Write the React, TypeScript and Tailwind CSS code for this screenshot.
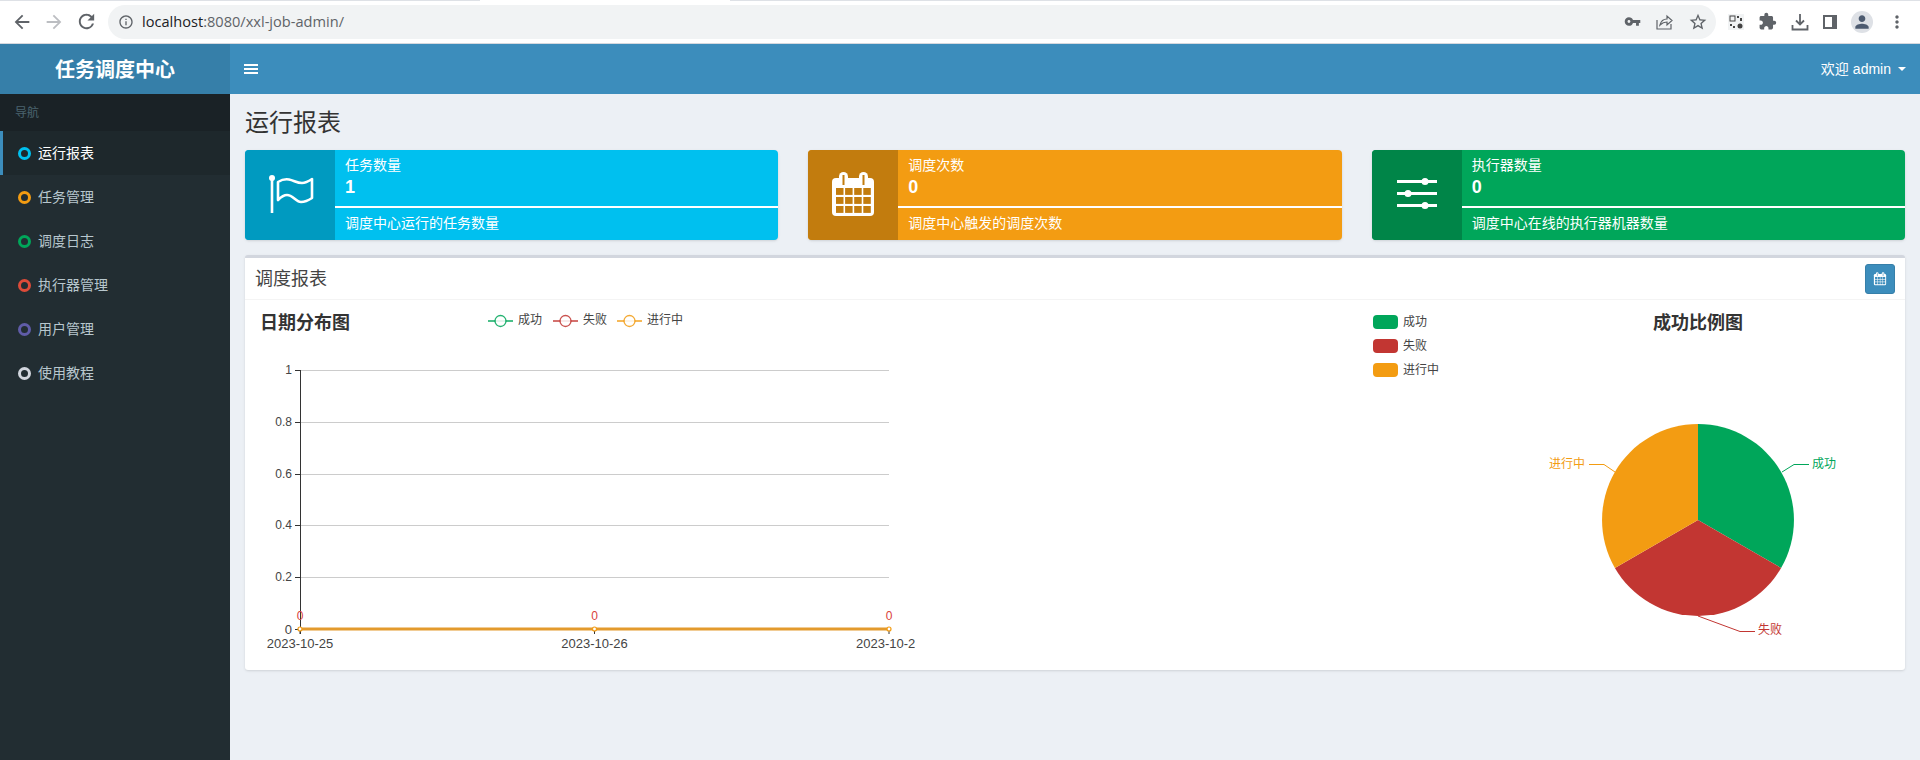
import React from "react";
import {
  MdArrowBack,
  MdArrowForward,
  MdRefresh,
  MdInfoOutline,
  MdVpnKey,
  MdStarBorder,
  MdExtension,
  MdPerson,
  MdMoreVert,
} from "react-icons/md";

const menus = [
  { name: "运行报表", ring: "border-[#00c0ef]", active: true },
  { name: "任务管理", ring: "border-[#f39c12]" },
  { name: "调度日志", ring: "border-[#00a65a]" },
  { name: "执行器管理", ring: "border-[#dd4b39]" },
  { name: "用户管理", ring: "border-[#605ca8]" },
  { name: "使用教程", ring: "border-[#d2d6de]" },
];

function FlagIcon() {
  return (
    <svg width="48" height="48" viewBox="0 0 48 48" fill="none" stroke="white">
      <circle cx="6" cy="7" r="3" fill="white" stroke="none" />
      <path d="M6 8V42" strokeWidth="2.6" />
      <path
        d="M12 11C16 8.5 20 8 23 8.5C28 9.5 31 12 36 12C40 12 43 10 46 8V27C43 29 40 31 35 31C30 31 27 24 21 24C18 24 15 26 12 29Z"
        strokeWidth="2.6"
        strokeLinejoin="round"
      />
    </svg>
  );
}

function CalendarIcon({ size = 48, cell = "#c27c0e" }: { size?: number; cell?: string }) {
  const cells = [];
  for (let r = 0; r < 3; r++) {
    for (let c = 0; c < 4; c++) {
      cells.push(<rect key={`${r}-${c}`} x={7 + c * 9.1} y={17 + r * 9} width="7.5" height="6.9" fill={cell} />);
    }
  }
  return (
    <svg width={size} height={size} viewBox="0 0 48 48">
      <rect x="3" y="7" width="42" height="38" rx="4" fill="white" />
      <rect x="10" y="1" width="9" height="14" rx="4.5" fill="white" />
      <rect x="30" y="1" width="9" height="14" rx="4.5" fill="white" />
      <rect x="13.5" y="4" width="2" height="10" fill={cell} />
      <rect x="33.5" y="4" width="2" height="10" fill={cell} />
      {cells}
    </svg>
  );
}

function SlidersIcon() {
  return (
    <svg width="40" height="32" viewBox="0 0 40 32" fill="white" className="mb-[5px]">
      <rect x="0" y="3" width="40" height="3" />
      <circle cx="28" cy="4.5" r="3.5" />
      <rect x="0" y="15" width="40" height="3" />
      <circle cx="11" cy="16.5" r="3.5" />
      <rect x="0" y="27" width="40" height="3" />
      <circle cx="28" cy="28.5" r="3.5" />
    </svg>
  );
}

const boxes = [
  {
    title: "任务数量",
    count: "1",
    desc: "调度中心运行的任务数量",
    bg: "bg-[#00c0ef]",
    iconBg: "bg-[#009ac0]",
    icon: <FlagIcon />,
  },
  {
    title: "调度次数",
    count: "0",
    desc: "调度中心触发的调度次数",
    bg: "bg-[#f39c12]",
    iconBg: "bg-[#c27c0e]",
    icon: <CalendarIcon />,
  },
  {
    title: "执行器数量",
    count: "0",
    desc: "调度中心在线的执行器机器数量",
    bg: "bg-[#00a65a]",
    iconBg: "bg-[#008548]",
    icon: <SlidersIcon />,
  },
];

function BrowserBar() {
  return (
    <div className="h-[44px] bg-white border-b border-[#d5d8de] flex items-center text-[#5f6368] relative">
      <div className="absolute top-0 left-0 w-[480px] h-px bg-[#dee1e6]" />
      <div className="absolute top-0 left-[730px] right-0 h-px bg-[#dee1e6]" />
      <div className="w-[108px] flex items-center pl-[11px] gap-[10px] shrink-0">
        <MdArrowBack size={22} />
        <MdArrowForward size={22} className="text-[#bcbec2]" />
        <MdRefresh size={23} />
      </div>
      <div className="w-[1608px] h-[34px] bg-[#f1f3f4] rounded-full flex items-center pl-[10px] pr-[8px]">
        <MdInfoOutline size={16} />
        <span className="ml-[8px] text-[14.6px] font-['Open_Sans',sans-serif]">
          <span className="text-[#202124]">localhost</span>:8080/xxl-job-admin/
        </span>
        <div className="ml-auto flex items-center gap-[15px]">
          <MdVpnKey size={17} />
          <svg width="17" height="17" viewBox="0 0 17 17" fill="none" stroke="#5f6368" strokeWidth="1.2">
            <path d="M1 7V16H15V11" />
            <path d="M4 12C5 8 8 6 11 6V3L16 7.5L11 12V9C8 9 6 10 4 12Z" />
          </svg>
          <MdStarBorder size={20} />
        </div>
      </div>
      <div className="flex items-center ml-[12px] gap-[14px]">
        <svg width="16" height="16" viewBox="0 0 16 16" className="bg-[#f1f3f4]">
          <rect x="2" y="2" width="5" height="5" fill="none" stroke="#444" />
          <rect x="9" y="2" width="2" height="2" fill="#444" />
          <rect x="12" y="4" width="2" height="3" fill="#444" />
          <rect x="2" y="10" width="2" height="2" fill="#444" />
          <rect x="5" y="12" width="2" height="2" fill="#444" />
          <circle cx="12" cy="12" r="2.5" fill="#444" />
        </svg>
        <MdExtension size={19} />
        <svg width="18" height="18" viewBox="0 0 18 18" fill="none" stroke="#5f6368" strokeWidth="1.8">
          <path d="M9 1V11M5 7.5L9 11.5L13 7.5" />
          <path d="M1.5 12V16.5H16.5V12" />
        </svg>
        <svg width="14" height="14" viewBox="0 0 14 14">
          <rect width="14" height="14" fill="#5f6368" />
          <rect x="2" y="2" width="7" height="10" fill="white" />
        </svg>
        <div className="w-[22px] h-[22px] rounded-full bg-[#dee1e6] flex items-center justify-center">
          <MdPerson size={20} className="text-[#4d5b70]" />
        </div>
        <MdMoreVert size={20} />
      </div>
    </div>
  );
}

function Sidebar() {
  return (
    <aside className="w-[230px] shrink-0 bg-[#222d32] text-sm">
      <div className="h-[37px] bg-[#1a2226] pl-[15px] flex items-center text-xs text-[#4b646f]">导航</div>
      {menus.map((m) => (
        <div
          key={m.name}
          className={
            m.active
              ? "h-[44px] flex items-center bg-[#1e282c] border-l-[3px] border-[#3c8dbc] pl-[15px] text-white"
              : "h-[44px] flex items-center border-l-[3px] border-transparent pl-[15px] text-[#b8c7ce]"
          }
        >
          <span className={`w-[13px] h-[13px] rounded-full border-[3px] ${m.ring} mr-[7px]`} />
          {m.name}
        </div>
      ))}
    </aside>
  );
}

function LineChart() {
  const ys = [
    { v: "1", y: 370 },
    { v: "0.8", y: 422 },
    { v: "0.6", y: 474 },
    { v: "0.4", y: 525 },
    { v: "0.2", y: 577 },
  ];
  const xs = [300, 594.5, 889];
  const legend = [
    { x: 488, c: "#00a65a", t: "成功" },
    { x: 553, c: "#c23632", t: "失败" },
    { x: 617, c: "#f39c12", t: "进行中" },
  ];
  return (
    <svg width="670" height="370" viewBox="245 300 670 370" className="shrink-0">
      <text x="260" y="329" fontSize="18" fontWeight="bold" fill="#333">
        日期分布图
      </text>
      {legend.map((l) => (
        <g key={l.t}>
          <line x1={l.x} x2={l.x + 25} y1="321" y2="321" stroke={l.c} strokeWidth="2" opacity="0.7" />
          <circle cx={l.x + 12.5} cy="321" r="5.5" fill="white" stroke={l.c} strokeWidth="1.3" opacity="0.85" />
          <text x={l.x + 30} y="324" fontSize="12" fill="#444">
            {l.t}
          </text>
        </g>
      ))}
      {ys.map((t) => (
        <g key={t.v}>
          <line x1="300" x2="889" y1={t.y + 0.5} y2={t.y + 0.5} stroke="#ccc" />
          <line x1="295" x2="300" y1={t.y + 0.5} y2={t.y + 0.5} stroke="#333" />
          <text x="292" y={t.y + 4} fontSize="12" fill="#444" textAnchor="end">
            {t.v}
          </text>
        </g>
      ))}
      <line x1="300.5" x2="300.5" y1="370" y2="634" stroke="#333" />
      <line x1="295" x2="300" y1="629.5" y2="629.5" stroke="#333" />
      <text x="292" y="634" fontSize="13" fill="#444" textAnchor="end">
        0
      </text>
      <line x1="300" x2="889" y1="629" y2="629" stroke="#e39a2d" strokeWidth="3" />
      {xs.map((x) => (
        <g key={x}>
          <line x1={x} x2={x} y1="629" y2="634" stroke="#333" />
          <circle cx={x} cy="629" r="2" fill="white" stroke="#f39c12" strokeWidth="1.2" />
          <text x={x} y="620" fontSize="12" fill="#d9423c" textAnchor="middle">
            0
          </text>
        </g>
      ))}
      <text x="300" y="648" fontSize="13" fill="#444" textAnchor="middle">
        2023-10-25
      </text>
      <text x="594.5" y="648" fontSize="13" fill="#444" textAnchor="middle">
        2023-10-26
      </text>
      <text x="856" y="648" fontSize="13" fill="#444">
        2023-10-2
      </text>
    </svg>
  );
}

function PieChart() {
  const legend = [
    { y: 315, c: "#00a65a", t: "成功" },
    { y: 339, c: "#c23632", t: "失败" },
    { y: 363, c: "#f39c12", t: "进行中" },
  ];
  return (
    <svg width="545" height="370" viewBox="1360 300 545 370" className="shrink-0">
      {legend.map((l) => (
        <g key={l.t}>
          <rect x="1373" y={l.y} width="25" height="14" rx="4" fill={l.c} />
          <text x="1403" y={l.y + 11} fontSize="12" fill="#444">
            {l.t}
          </text>
        </g>
      ))}
      <text x="1698" y="329" fontSize="18" fontWeight="bold" fill="#333" textAnchor="middle">
        成功比例图
      </text>
      <path d="M1698 520V424A96 96 0 0 1 1781.1 568Z" fill="#00a65a" />
      <path d="M1698 520L1781.1 568A96 96 0 0 1 1614.9 568Z" fill="#c23632" />
      <path d="M1698 520L1614.9 568A96 96 0 0 1 1698 424Z" fill="#f39c12" />
      <path d="M1782 472L1794 464.5H1809" fill="none" stroke="#00a65a" />
      <path d="M1698 616L1740 631.5H1755" fill="none" stroke="#c23632" />
      <path d="M1615 472L1604 464.5H1589" fill="none" stroke="#f39c12" />
      <text x="1812" y="468" fontSize="12" fill="#00a65a">
        成功
      </text>
      <text x="1758" y="634" fontSize="12" fill="#c23632">
        失败
      </text>
      <text x="1585" y="468" fontSize="12" fill="#f39c12" textAnchor="end">
        进行中
      </text>
    </svg>
  );
}

export default function App() {
  return (
    <div className="w-[1920px] h-[760px] overflow-hidden bg-[#ecf0f5] flex flex-col font-['Liberation_Sans','Noto_Sans_CJK_SC',sans-serif]">
      <BrowserBar />
      <header className="h-[50px] shrink-0 flex text-white bg-[#3c8dbc]">
        <div className="w-[230px] bg-[#367fa9] flex items-center justify-center pt-px text-xl font-bold">任务调度中心</div>
        <div className="flex-1 flex items-center px-[15px]">
          <div className="w-[14px] flex flex-col gap-[2px] ml-[-1px]">
            <span className="h-[2px] bg-white" />
            <span className="h-[2px] bg-white" />
            <span className="h-[2px] bg-white" />
          </div>
          <div className="ml-auto flex items-center gap-[4px] text-sm">
            <span>欢迎</span>
            <span>admin</span>
            <span className="ml-[3px] mr-[-1px] border-x-4 border-t-4 border-x-transparent border-t-white" />
          </div>
        </div>
      </header>
      <div className="flex flex-1 min-h-0">
        <Sidebar />
        <main className="flex-1 px-[15px]">
          <h1 className="h-[56px] pt-[16px] text-2xl leading-[26px] text-[#333]">运行报表</h1>
          <div className="grid grid-cols-3 gap-[30px]">
            {boxes.map((b) => (
              <div key={b.title} className={`h-[90px] flex rounded-sm overflow-hidden shadow-sm text-white ${b.bg}`}>
                <div className={`w-[90px] flex items-center justify-center ${b.iconBg}`}>{b.icon}</div>
                <div className="flex-1">
                  <div className="h-[58px] px-[10px] pt-[5px] border-b-2 border-white">
                    <div className="text-sm leading-5">{b.title}</div>
                    <div className="text-lg font-bold leading-[24px]">{b.count}</div>
                  </div>
                  <div className="px-[10px] pt-[5px] text-sm leading-5">{b.desc}</div>
                </div>
              </div>
            ))}
          </div>
          <section className="mt-[15px] h-[415px] bg-white border-t-[3px] border-[#d2d6de] rounded-[3px] shadow-sm">
            <div className="h-[42px] flex items-center pl-[10px] pr-[10px] border-b border-[#f4f4f4]">
              <h3 className="text-lg text-[#444]">调度报表</h3>
              <button className="ml-auto w-[30px] h-[30px] bg-[#3c8dbc] border border-[#367fa9] rounded-[3px] flex items-center justify-center">
                <CalendarIcon size={14} cell="#3c8dbc" />
              </button>
            </div>
            <div className="flex justify-between">
              <LineChart />
              <PieChart />
            </div>
          </section>
        </main>
      </div>
    </div>
  );
}
